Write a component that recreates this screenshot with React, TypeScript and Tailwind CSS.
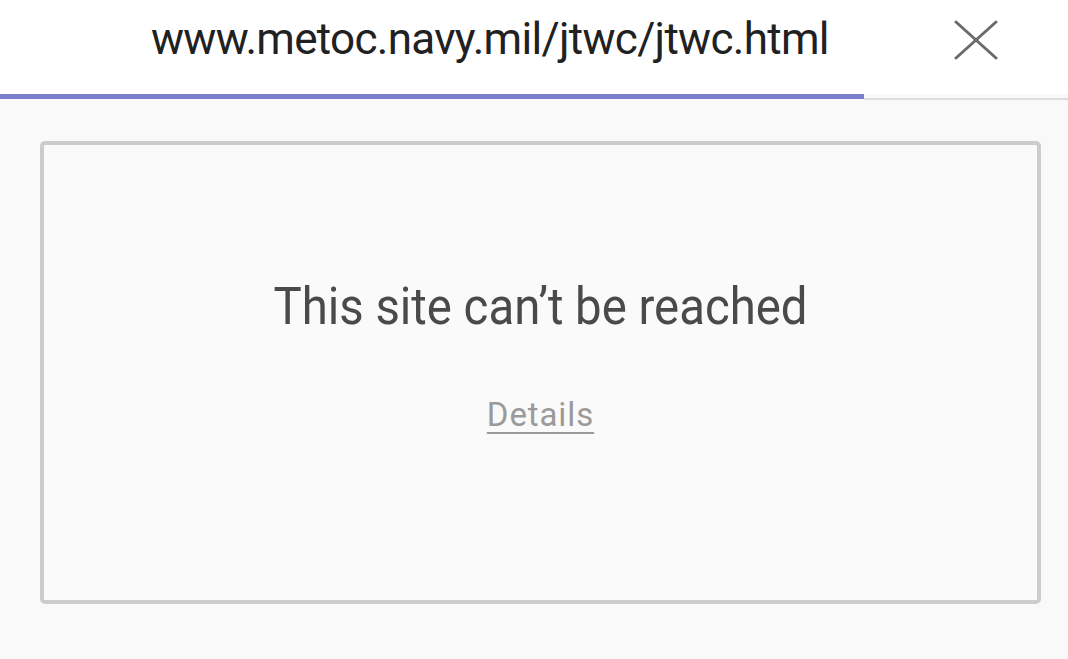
export default function App() {
  return (
    <div className="w-[1068px] h-[659px] overflow-hidden bg-[#f9f9f9] flex flex-col font-['Roboto',sans-serif]">
      <div className="bg-white h-[94px] flex items-center">
        <span className="ml-[151px] text-[44px] text-[#212121] tracking-[-0.7px] leading-none -mt-[16px]">
          www.metoc.navy.mil/jtwc/jtwc.html
        </span>
        <svg
          className="ml-auto mr-[70px] -mt-[14px]"
          width="44"
          height="40"
          viewBox="0 0 44 40"
          fill="none"
          stroke="#6b6b6b"
          strokeWidth="3"
          strokeLinecap="round"
        >
          <line x1="2" y1="2" x2="42" y2="38" />
          <line x1="42" y1="2" x2="2" y2="38" />
        </svg>
      </div>
      <div className="flex items-start h-[6px]">
        <div className="w-[864px] h-[5px] bg-[#7b7fcb]" />
        <div className="flex-1 mt-[4px] h-[2px] bg-[#dcdcdc]" />
      </div>
      <div className="pl-[40px] pr-[27px] pt-[41px]">
        <div className="h-[463px] border-[4px] border-[#cccccc] rounded-[5px] bg-[#fafafa] flex flex-col items-center pt-[136px]">
          <h1 className="text-[52px] text-[#4a4a4a] leading-none scale-x-[0.91] whitespace-nowrap">
            This site can’t be reached
          </h1>
          <a className="mt-[65px] text-[33px] text-[#9a9a9a] tracking-[0.9px] underline decoration-[2px] underline-offset-[6px] leading-none">
            Details
          </a>
        </div>
      </div>
    </div>
  );
}
